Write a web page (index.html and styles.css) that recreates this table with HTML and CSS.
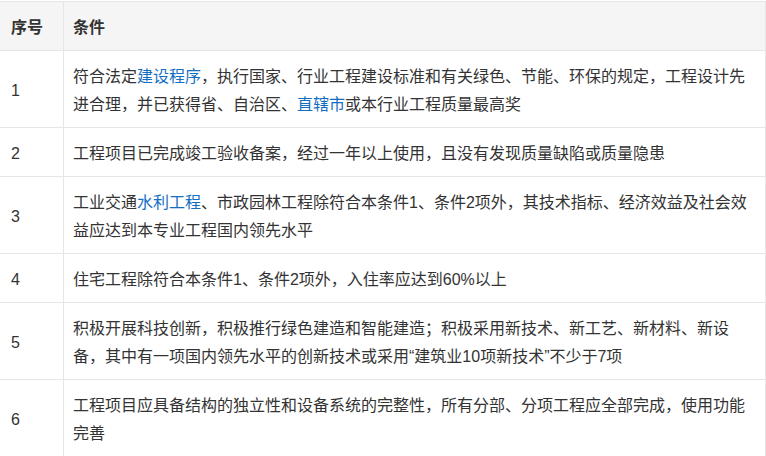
FILE: index.html
```html
<!DOCTYPE html>
<html lang="zh-CN">
<head>
  <meta charset="UTF-8">
  <meta name="viewport" content="width=device-width, initial-scale=1.0">
  <title>评选条件</title>
  <link rel="stylesheet" href="styles.css">
</head>
<body>

  <table class="tabla-condiciones">
    <thead>
      <tr>
        <th class="col-num">序号</th>
        <th>条件</th>
      </tr>
    </thead>
    <tbody>
      <tr>
        <td class="col-num">1</td>
        <td>符合法定<a href="#">建设程序</a>，执行国家、行业工程建设标准和有关绿色、节能、环保的规定，工程设计先进合理，并已获得省、自治区、<a href="#">直辖市</a>或本行业工程质量最高奖</td>
      </tr>
      <tr>
        <td class="col-num">2</td>
        <td>工程项目已完成竣工验收备案，经过一年以上使用，且没有发现质量缺陷或质量隐患</td>
      </tr>
      <tr>
        <td class="col-num">3</td>
        <td>工业交通<a href="#">水利工程</a>、市政园林工程除符合本条件1、条件2项外，其技术指标、经济效益及社会效益应达到本专业工程国内领先水平</td>
      </tr>
      <tr>
        <td class="col-num">4</td>
        <td>住宅工程除符合本条件1、条件2项外，入住率应达到60%以上</td>
      </tr>
      <tr>
        <td class="col-num">5</td>
        <td>积极开展科技创新，积极推行绿色建造和智能建造；积极采用新技术、新工艺、新材料、新设备，其中有一项国内领先水平的创新技术或采用“建筑业10项新技术”不少于7项</td>
      </tr>
      <tr>
        <td class="col-num">6</td>
        <td>工程项目应具备结构的独立性和设备系统的完整性，所有分部、分项工程应全部完成，使用功能完善</td>
      </tr>
    </tbody>
  </table>

</body>
</html>
```

FILE: styles.css
```css
body {
  margin: 0;
  background-color: #fff;
  font-family: "Liberation Sans", Arial, "Noto Sans CJK SC", sans-serif;
  font-size: 16px;
  color: #333;
  overflow: hidden;
}

.tabla-condiciones {
  width: 767px;
  margin: 1px 0 0 -1px;
  border-collapse: collapse;
  table-layout: fixed;
}

.tabla-condiciones th,
.tabla-condiciones td {
  border: 1px solid #e6e6e6;
  padding: 12px 8px 8px 9px;
  line-height: 28px;
  text-align: left;
  vertical-align: middle;
}

.tabla-condiciones th {
  background-color: #f5f5f5;
  font-weight: bold;
}

.tabla-condiciones .col-num {
  width: 64px;
  padding-left: 11px;
  box-sizing: border-box;
}

.tabla-condiciones a {
  color: #136ec2;
  text-decoration: none;
}
```
